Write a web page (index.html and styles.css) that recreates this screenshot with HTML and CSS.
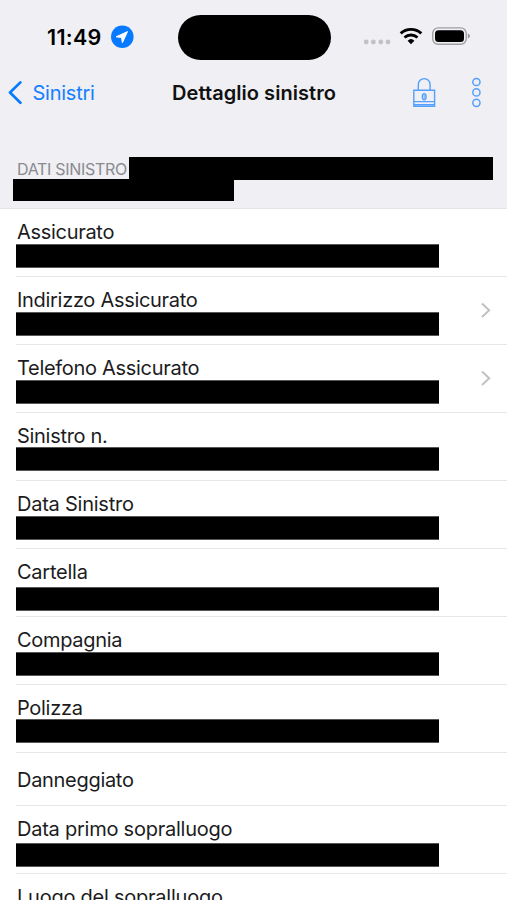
FILE: index.html
```html
<!DOCTYPE html>
<html lang="it">
<head>
<meta charset="utf-8">
<title>Dettaglio sinistro</title>
<link rel="stylesheet" href="styles.css">
</head>
<body>
<div class="status">
  <div class="status-left">
    <span class="time">11:49</span>
    <svg class="location" width="24" height="24" viewBox="0 0 24 24"><circle cx="12.3" cy="11.7" r="11.3" fill="#087aff"/><path d="M17.5 6.6 6.2 11.8l5.4.7.8 5.2z" fill="#fff" stroke="#fff" stroke-width="1" stroke-linejoin="round"/></svg>
  </div>
  <div class="island"></div>
  <div class="status-right">
    <svg width="108" height="24" viewBox="0 0 108 24">
      <g fill="#c2c2c6"><circle cx="4.2" cy="17" r="2.4"/><circle cx="11.4" cy="17" r="2.4"/><circle cx="18.8" cy="17" r="2.4"/><circle cx="26" cy="17" r="2.4"/></g>
      <g fill="none" stroke="#000" stroke-width="2.9"><path d="M38.7 8.4a15.1 15.1 0 0 1 20.6 0"/><path d="M42.5 12.5a9.6 9.6 0 0 1 13 0"/></g>
      <path d="M45.6 15.7a5 5 0 0 1 6.8 0L49 19.2z"/>
      <rect x="70.7" y="2.9" width="33.5" height="16.4" rx="5.4" fill="none" stroke="#a0a0a3" stroke-width="1.4"/>
      <rect x="73" y="5.2" width="29" height="11.8" rx="3.5"/>
      <path d="M105.8 8.6c2.8 1 2.8 4 0 5z" fill="#98989b"/>
    </svg>
  </div>
</div>
<nav class="nav">
  <a class="back">
    <svg width="16" height="26" viewBox="0 0 16 26"><path d="M14.4 2.4 4 12.5l10.4 10.2" fill="none" stroke="#087aff" stroke-width="2.7" stroke-linecap="round" stroke-linejoin="round"/></svg>
    <span>Sinistri</span>
  </a>
  <h1>Dettaglio sinistro</h1>
  <div class="actions">
    <svg width="24" height="32" viewBox="0 0 24 32"><g fill="none" stroke="#55a0fb" stroke-width="1.4"><path d="M1.8 13.2h20.8v16H1.8zM1.8 24.6h20.8M1.8 27.6h20.8M6.3 13.2V7.5a5.9 5.9 0 0 1 11.8 0v5.7"/><ellipse cx="12.2" cy="19.7" rx="1.9" ry="3"/></g><path d="M12.2 18v3.6" stroke="#55a0fb"/></svg>
    <svg width="12" height="32" viewBox="0 0 12 32"><g fill="none" stroke="#55a0fb" stroke-width="1.5"><circle cx="6.4" cy="5" r="3.6"/><circle cx="6.4" cy="15.4" r="3.6"/><circle cx="6.4" cy="25.8" r="3.6"/></g></svg>
  </div>
</nav>
<header class="section">
  <div class="section-line"><span class="section-title">DATI SINISTRO</span><span class="mask mask-first"></span></div>
  <div class="mask mask-second"></div>
</header>
<main class="list">
  <div class="row"><span class="label">Assicurato</span><div class="bar"></div></div>
  <div class="row"><span class="label">Indirizzo Assicurato</span><div class="bar"></div><svg class="chevron" width="12" height="18" viewBox="0 0 12 18"><path d="m2 2.5 7.2 6.8L2 16" fill="none" stroke="#c0c0c3" stroke-width="1.9"/></svg></div>
  <div class="row"><span class="label">Telefono Assicurato</span><div class="bar"></div><svg class="chevron" width="12" height="18" viewBox="0 0 12 18"><path d="m2 2.5 7.2 6.8L2 16" fill="none" stroke="#c0c0c3" stroke-width="1.9"/></svg></div>
  <div class="row"><span class="label">Sinistro n.</span><div class="bar raised"></div></div>
  <div class="row"><span class="label wide">Data Sinistro</span><div class="bar"></div></div>
  <div class="row"><span class="label wide">Cartella</span><div class="bar lowest"></div></div>
  <div class="row"><span class="label">Compagnia</span><div class="bar"></div></div>
  <div class="row"><span class="label">Polizza</span><div class="bar high"></div></div>
  <div class="row short"><span class="label">Danneggiato</span></div>
  <div class="row"><span class="label wide">Data primo sopralluogo</span><div class="bar low"></div></div>
  <div class="row"><span class="label wide">Luogo del sopralluogo</span></div>
</main>
</body>
</html>
```
FILE: styles.css
```css
* { box-sizing: border-box; }
body {
  margin: 0;
  height: 900px;
  overflow: hidden;
  background: #efeff4;
  color: #1c1c1e;
  font-family: Inter, "Liberation Sans", sans-serif;
}
svg { display: block; flex: none; }
.status {
  height: 74px;
  display: grid;
  grid-template-columns: 177.5px 153px 1fr;
  align-items: center;
}
.status-left { display: flex; align-items: center; padding-left: 47px; }
.time { width: 63px; font-size: 21.5px; font-weight: 600; letter-spacing: 0.3px; color: #000; white-space: nowrap; }
.island { height: 45px; border-radius: 23px; background: #000; }
.status-right { padding-left: 31.5px; }
.nav {
  height: 38px;
  display: grid;
  grid-template-columns: 154px 200px 1fr;
  align-items: center;
}
.back { display: flex; align-items: center; gap: 10.5px; padding-left: 6px; color: #167fff; font-size: 20px; letter-spacing: -0.25px; }
h1 { margin: 0; text-align: center; font-size: 20px; font-weight: 600; letter-spacing: 0.05px; color: #111; white-space: nowrap; }
.actions { display: flex; gap: 34px; padding-left: 58px; }
.section { height: 97px; padding: 45px 14px 0 13px; border-bottom: 1px solid #e4e4e8; }
.section-line { display: flex; height: 22px; }
.section-title { width: 116.5px; padding: 2px 0 0 4px; font-size: 16px; line-height: 20px; letter-spacing: -0.3px; color: #8a8a8f; white-space: nowrap; }
.mask { background: #000; }
.mask-first { width: 364px; height: 22.5px; }
.mask-second { width: 221px; height: 22px; }
.list { background: #fff; height: 691px; overflow: hidden; }
.row {
  display: grid;
  grid-template-columns: 423px 1fr;
  grid-template-rows: 22px 1fr;
  height: 68px;
  margin-left: 16px;
  padding-top: 12px;
  border-bottom: 1px solid #e7e7e9;
}
.row.short { height: 53px; padding-top: 16px; }
.label { grid-column: 1; padding-left: 1px; font-size: 20px; line-height: 22px; letter-spacing: -0.3px; white-space: nowrap; }
.label.wide { letter-spacing: -0.24px; }
.bar {
  grid-column: 1;
  grid-row: 2;
  height: 24px;
  margin-top: 1px;
  border: solid #555;
  border-width: 1px 0;
  background: #000;
}
.bar.raised, .bar.high { margin-top: 0; }
.bar.low { margin-top: 3px; }
.bar.lowest { margin-top: 4px; }
.chevron { grid-column: 2; grid-row: 1 / 3; margin: 12px 0 0 41px; }
```
